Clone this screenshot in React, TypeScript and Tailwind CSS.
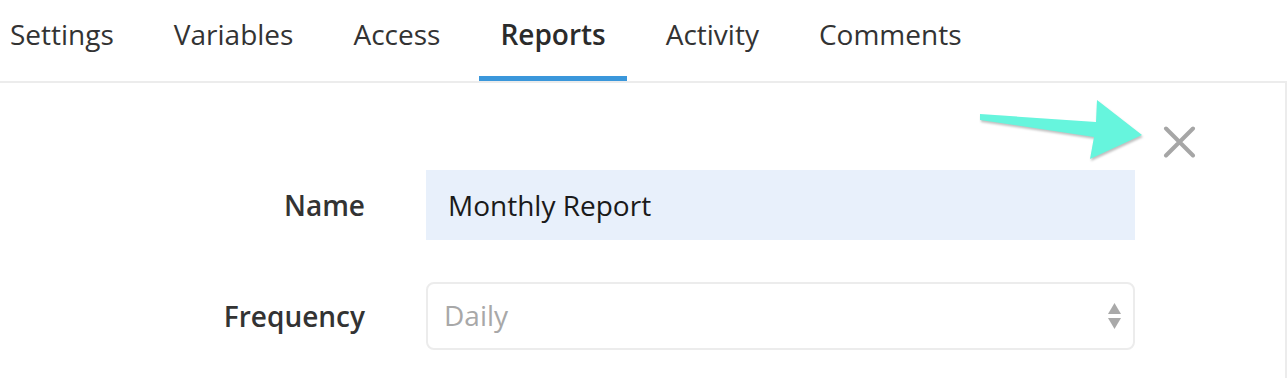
import React from "react";

const tabs = ["Settings", "Variables", "Access", "Reports", "Activity", "Comments"];

const App: React.FC = () => {
  const active = "Reports";

  return (
    <div className="w-[1288px] h-[378px] overflow-hidden bg-white font-['Open_Sans',sans-serif] relative">
      {/* tab bar */}
      <div className="flex h-[81px] ml-[-11px] gap-[18px]">
        {tabs.map((t) => (
          <div
            key={t}
            className={`px-[21px] pt-[14px] h-[81px] text-[28px] leading-[40px] ${
              t === active
                ? "font-semibold text-[#2b2b2b] border-b-[5px] border-[#3a97db]"
                : "text-[#333333]"
            }`}
          >
            {t}
          </div>
        ))}
      </div>

      {/* panel */}
      <div className="w-[1287px] h-[297px] border-t-2 border-r-2 border-[#ececec]">
        <div className="flex justify-end pt-[43px] pr-[89px]">
          <button className="w-[33px] h-[32px] text-[#a6a6a6]">
            <svg viewBox="0 0 33 32" className="w-[33px] h-[32px]">
              <path
                d="M3 2.5 L30 29.5 M30 2.5 L3 29.5"
                stroke="currentColor"
                strokeWidth="4"
                strokeLinecap="round"
                fill="none"
              />
            </svg>
          </button>
        </div>

        <div className="grid grid-cols-[365px_709px] gap-x-[61px] gap-y-[42px] mt-[12px] items-center">
          <label className="text-right text-[28px] font-semibold text-[#333333]">Name</label>
          <div className="h-[70px] bg-[#e8f0fb] flex items-center pl-[22px] text-[28px] text-[#1a1a1a]">
            Monthly Report
          </div>

          <label className="text-right text-[28px] font-semibold text-[#333333]">Frequency</label>
          <div className="h-[68px] border-2 border-[#ececec] rounded-[8px] flex items-center justify-between pl-[16px] pr-[12px] text-[28px] text-[#a8a8a8]">
            <span className="-mt-[2px]">Daily</span>
            <svg viewBox="0 0 13 26" className="w-[13px] h-[26px] text-[#a9a9a9]">
              <path d="M6.5 0 L13 11 L0 11 Z" fill="currentColor" />
              <path d="M0 15 L13 15 L6.5 26 Z" fill="currentColor" />
            </svg>
          </div>
        </div>
      </div>

      {/* annotation arrow */}
      <svg
        className="absolute left-[970px] top-[95px] w-[180px] h-[70px] drop-shadow-[1px_2px_1px_rgba(0,0,0,0.25)]"
        viewBox="970 95 180 70"
      >
        <polygon
          points="980,114 1096,122 1097,100 1142,135 1090,159 1094,137 980,120"
          fill="#66f5dd"
          strokeLinejoin="round"
        />
      </svg>
    </div>
  );
};

export default App;
